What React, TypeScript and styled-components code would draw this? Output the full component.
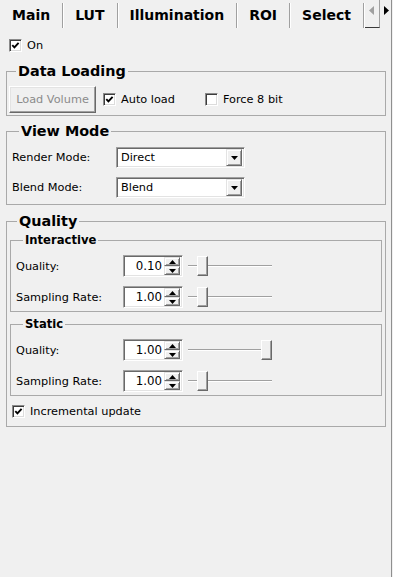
import React from "react";
import styled, { createGlobalStyle } from "styled-components";

const GlobalStyle = createGlobalStyle`
  html, body { margin: 0; padding: 0; background: #f0f0f0; }
  body {
    font-family: "DejaVu Sans", "Liberation Sans", sans-serif;
    font-size: 11.3px;
    color: #000;
  }
  * { box-sizing: border-box; }
`;

const Window = styled.div`
  width: 392px;
  height: 577px;
  border-right: 1px solid #8f8f8f;
  background: #f0f0f0;
  display: flex;
  flex-direction: column;
  overflow: hidden;
`;

const TabBar = styled.div`
  display: flex;
  height: 28px;
  flex-shrink: 0;
`;

const Tab = styled.div<{ $selected?: boolean }>`
  height: 25px;
  margin-top: 3px;
  padding: 0 12px;
  font-weight: bold;
  font-size: 14px;
  line-height: 25px;
  white-space: nowrap;
  border-right: 1px solid #a0a0a0;
  box-shadow: 1px 0 0 #ffffff;
`;

const ArrowGroup = styled.div`
  display: flex;
  margin-left: 1px;
  height: 28px;
`;

const ArrowBtn = styled.div<{ $underline?: boolean }>`
  width: 15px;
  height: 28px;
  display: flex;
  align-items: center;
  justify-content: center;
  padding-bottom: 6px;
  border-right: 1px solid #a0a0a0;
  border-bottom: 1px solid ${(p) => (p.$underline ? "#3a3a3a" : "transparent")};
`;

const Pane = styled.div`
  flex: 1;
  display: flex;
  flex-direction: column;
  padding: 0 5px 0 6px;
`;

const CheckRow = styled.label<{ $mt?: number; $ml?: number }>`
  display: flex;
  align-items: center;
  gap: 5px;
  height: 13px;
  margin-top: ${(p) => p.$mt ?? 0}px;
  margin-left: ${(p) => p.$ml ?? 0}px;
  white-space: nowrap;
`;

const CheckBox = styled.span`
  width: 13px;
  height: 13px;
  flex-shrink: 0;
  background: #ffffff;
  border: 1px solid;
  border-color: #8a8a8a #ffffff #ffffff #8a8a8a;
  box-shadow: inset 1px 1px 0 #3c3c3c, inset -1px -1px 0 #dcdcdc;
  display: flex;
  align-items: center;
  justify-content: center;
`;

const Group = styled.fieldset<{ $mt: number; $pt: number; $pb: number; $pl: number; $pr: number }>`
  margin: ${(p) => p.$mt}px 0 0 0;
  min-width: 0;
  border: 1px solid #a9a9a9;
  padding: ${(p) => `${p.$pt}px ${p.$pr}px ${p.$pb}px ${p.$pl}px`};
  display: flex;
  flex-direction: column;
`;

const Legend = styled.legend<{ $sub?: boolean }>`
  margin-left: 7px;
  padding: 0 2px;
  font-weight: bold;
  font-size: ${(p) => (p.$sub ? "11.6px" : "14.4px")};
  line-height: ${(p) => (p.$sub ? "14px" : "18px")};
`;

const HRow = styled.div`
  display: flex;
  align-items: center;
`;

const FormRow = styled.div<{ $h: number; $mt?: number }>`
  display: flex;
  align-items: center;
  height: ${(p) => p.$h}px;
  margin-top: ${(p) => p.$mt ?? 0}px;
`;

const FieldLabel = styled.span<{ $w: number }>`
  width: ${(p) => p.$w}px;
  flex-shrink: 0;
  white-space: nowrap;
`;

const PushButton = styled.div`
  width: 87px;
  height: 27px;
  display: flex;
  align-items: center;
  justify-content: center;
  color: #8b8b8b;
  background: #f0f0f0;
  border: 1px solid;
  border-color: #ffffff #696969 #696969 #ffffff;
  box-shadow: inset -1px -1px 0 #a0a0a0, inset 1px 1px 0 #e3e3e3;
  white-space: nowrap;
`;

const Combo = styled.div`
  width: 129px;
  height: 21px;
  background: #ffffff;
  border: 1px solid;
  border-color: #a0a0a0 #ffffff #ffffff #a0a0a0;
  box-shadow: inset 1px 1px 0 #696969, inset -1px -1px 0 #e3e3e3;
  display: flex;
  align-items: center;
  padding: 2px 2px 2px 3px;
`;

const ComboText = styled.span`
  flex: 1;
  padding-left: 1px;
`;

const SmallButton = styled.div<{ $w: number; $h: number }>`
  width: ${(p) => p.$w}px;
  height: ${(p) => p.$h}px;
  background: #f0f0f0;
  border: 1px solid;
  border-color: #e3e3e3 #696969 #696969 #e3e3e3;
  box-shadow: inset 1px 1px 0 #ffffff, inset -1px -1px 0 #a0a0a0;
  display: flex;
  align-items: center;
  justify-content: center;
  flex-shrink: 0;
`;

const Spin = styled.div`
  width: 60px;
  height: 22px;
  background: #ffffff;
  border: 1px solid;
  border-color: #a0a0a0 #ffffff #ffffff #a0a0a0;
  box-shadow: inset 1px 1px 0 #696969, inset -1px -1px 0 #e3e3e3;
  display: flex;
  align-items: center;
  padding: 2px;
`;

const SpinText = styled.span`
  flex: 1;
  text-align: right;
  padding-right: 2px;
  font-size: 11.8px;
`;

const SpinButtons = styled.div`
  display: flex;
  flex-direction: column;
`;

const Slider = styled.div`
  position: relative;
  width: 84px;
  height: 20px;
  margin-left: 5px;
  display: flex;
  align-items: center;
`;

const Groove = styled.div`
  width: 100%;
  height: 2px;
  border-top: 1px solid #a0a0a0;
  border-bottom: 1px solid #ffffff;
`;

const Handle = styled.div`
  position: absolute;
  top: 0;
  width: 11px;
  height: 20px;
  background: #f0f0f0;
  border: 1px solid;
  border-color: #ffffff #696969 #696969 #ffffff;
  box-shadow: inset -1px -1px 0 #a0a0a0;
`;

const CheckMark = () => (
  <svg width="11" height="11" viewBox="0 0 11 11">
    <path d="M2.3 5.2 L4.4 7.4 L8.6 2.8" stroke="#000" strokeWidth="1.9" fill="none" />
  </svg>
);

const Check = ({ checked, label, mt, ml }: { checked: boolean; label: string; mt?: number; ml?: number }) => (
  <CheckRow $mt={mt} $ml={ml}>
    <CheckBox>{checked && <CheckMark />}</CheckBox>
    <span>{label}</span>
  </CheckRow>
);

const DownTri = () => (
  <svg width="7" height="4" viewBox="0 0 7 4">
    <path d="M0 0 H7 L3.5 4 Z" fill="#000" />
  </svg>
);

const UpTri = () => (
  <svg width="7" height="4" viewBox="0 0 7 4">
    <path d="M0 4 H7 L3.5 0 Z" fill="#000" />
  </svg>
);

const ComboBox = ({ value }: { value: string }) => (
  <Combo>
    <ComboText>{value}</ComboText>
    <SmallButton $w={16} $h={17}>
      <DownTri />
    </SmallButton>
  </Combo>
);

const SpinSlider = ({ value, pos }: { value: string; pos: number }) => (
  <>
    <Spin>
      <SpinText>{value}</SpinText>
      <SpinButtons>
        <SmallButton $w={16} $h={9}>
          <UpTri />
        </SmallButton>
        <SmallButton $w={16} $h={9}>
          <DownTri />
        </SmallButton>
      </SpinButtons>
    </Spin>
    <Slider>
      <Groove />
      <Handle style={{ left: `${Math.round(pos * 73)}px` }} />
    </Slider>
  </>
);

const QualityBlock = ({ title, q, qp, s, sp, mt }: { title: string; q: string; qp: number; s: string; sp: number; mt: number }) => (
  <Group $mt={mt} $pt={8} $pb={3} $pl={5} $pr={5}>
    <Legend $sub>{title}</Legend>
    <FormRow $h={22}>
      <FieldLabel $w={107}>Quality:</FieldLabel>
      <SpinSlider value={q} pos={qp} />
    </FormRow>
    <FormRow $h={22} $mt={9}>
      <FieldLabel $w={107}>Sampling Rate:</FieldLabel>
      <SpinSlider value={s} pos={sp} />
    </FormRow>
  </Group>
);

export default function App() {
  const tabs = ["Main", "LUT", "Illumination", "ROI", "Select"];
  return (
    <>
      <GlobalStyle />
      <Window>
        <TabBar>
          {tabs.map((t, i) => (
            <Tab key={t} $selected={i === 0}>
              {t}
            </Tab>
          ))}
          <ArrowGroup>
            <ArrowBtn $underline>
              <svg width="5" height="9" viewBox="0 0 5 9">
                <path d="M5 0 V9 L0 4.5 Z" fill="#a0a0a0" />
              </svg>
            </ArrowBtn>
            <ArrowBtn>
              <svg width="5" height="9" viewBox="0 0 5 9">
                <path d="M0 0 V9 L5 4.5 Z" fill="#000" />
              </svg>
            </ArrowBtn>
          </ArrowGroup>
        </TabBar>
        <Pane>
          <Check checked label="On" mt={11} ml={3} />

          <Group $mt={10} $pt={6} $pb={2} $pl={2} $pr={2}>
            <Legend>Data Loading</Legend>
            <HRow>
              <PushButton>Load Volume</PushButton>
              <Check checked label="Auto load" ml={7} />
              <Check checked={false} label="Force 8 bit" ml={30} />
            </HRow>
          </Group>

          <Group $mt={6} $pt={7} $pb={6} $pl={5} $pr={5}>
            <Legend>View Mode</Legend>
            <FormRow $h={21}>
              <FieldLabel $w={104}>Render Mode:</FieldLabel>
              <ComboBox value="Direct" />
            </FormRow>
            <FormRow $h={21} $mt={9}>
              <FieldLabel $w={104}>Blend Mode:</FieldLabel>
              <ComboBox value="Blend" />
            </FormRow>
          </Group>

          <Group $mt={7} $pt={3} $pb={8} $pl={3} $pr={3}>
            <Legend>Quality</Legend>
            <QualityBlock title="Interactive" q="0.10" qp={0.12} s="1.00" sp={0.12} mt={0} />
            <QualityBlock title="Static" q="1.00" qp={1} s="1.00" sp={0.12} mt={5} />
            <Check checked label="Incremental update" mt={9} ml={2} />
          </Group>
        </Pane>
      </Window>
    </>
  );
}
